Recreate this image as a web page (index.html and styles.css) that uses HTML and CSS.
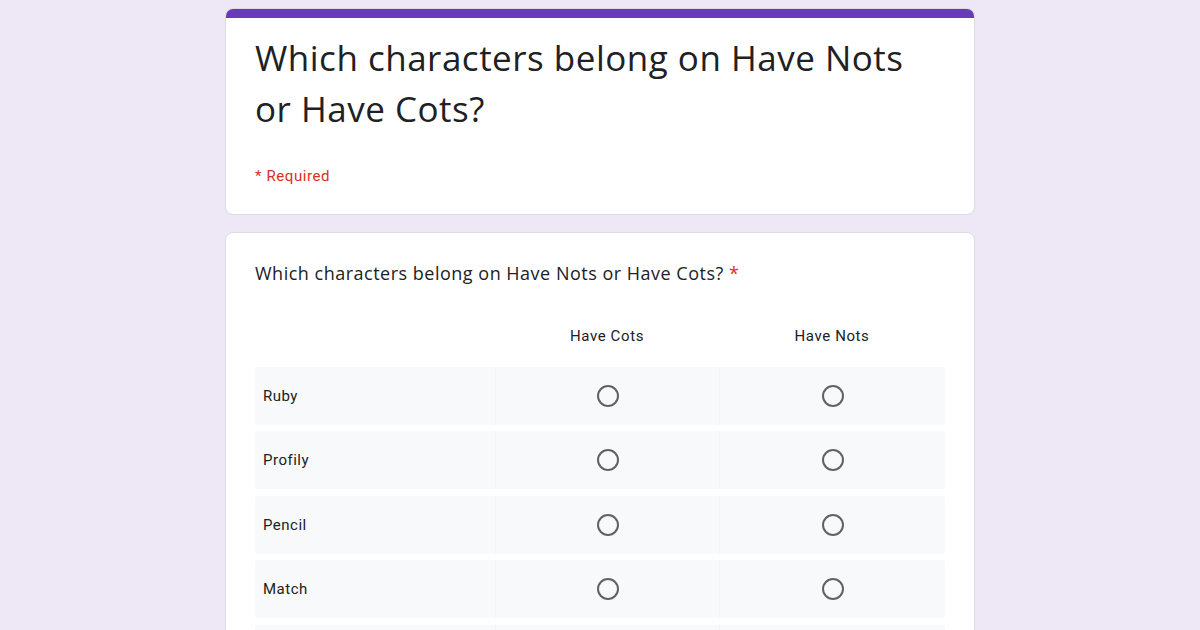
FILE: index.html
```html
<!DOCTYPE html>
<html>
<head>
<meta charset="utf-8">
<link rel="stylesheet" href="styles.css">
</head>
<body>
<div class="page">
  <div class="card header-card">
    <div class="accent"></div>
    <div class="header-body">
      <h1 class="title">Which characters belong on Have Nots or Have Cots?</h1>
      <div class="required">* Required</div>
    </div>
  </div>
  <div class="card question-card">
    <div class="question">Which characters belong on Have Nots or Have Cots? <span class="star">*</span></div>
    <div class="grid">
      <div class="grid-head">
        <div class="cell label"></div>
        <div class="cell">Have Cots</div>
        <div class="cell">Have Nots</div>
      </div>
      <div class="row"><div class="cell label">Ruby</div><div class="cell"><span class="radio"></span></div><div class="cell"><span class="radio"></span></div></div>
      <div class="row"><div class="cell label">Profily</div><div class="cell"><span class="radio"></span></div><div class="cell"><span class="radio"></span></div></div>
      <div class="row"><div class="cell label">Pencil</div><div class="cell"><span class="radio"></span></div><div class="cell"><span class="radio"></span></div></div>
      <div class="row"><div class="cell label">Match</div><div class="cell"><span class="radio"></span></div><div class="cell"><span class="radio"></span></div></div>
      <div class="row"><div class="cell label"></div><div class="cell"></div><div class="cell"></div></div>
    </div>
  </div>
</div>
</body>
</html>
```
FILE: styles.css
```css
html, body {
  margin: 0;
  padding: 0;
  background: #ede7f6;
  height: 630px;
  overflow: hidden;
}
body {
  font-family: Roboto, "Liberation Sans", sans-serif;
  color: #202124;
}
.page {
  width: 750px;
  margin: 0 auto;
  padding-top: 8px;
  display: flex;
  flex-direction: column;
  gap: 17px;
}
.card {
  background: #fff;
  border: 1px solid #dadce0;
  border-radius: 8px;
  box-sizing: border-box;
  overflow: hidden;
}
.header-card {
  height: 207px;
}
.accent {
  height: 10px;
  background: #673ab7;
  margin: -1px -1px 0 -1px;
}
.header-body {
  padding: 14px 30px 0 29px;
}
.title {
  margin: 0;
  font-family: "Open Sans", sans-serif;
  font-weight: 400;
  font-size: 35px;
  line-height: 51px;
  letter-spacing: 0.5px;
  color: #202124;
}
.required {
  margin-top: 32px;
  font-size: 15px;
  line-height: 20px;
  color: #d93025;
  letter-spacing: 0.6px;
}
.question-card {
  padding: 27px 29px 0 29px;
  height: 420px;
}
.question {
  font-family: "Open Sans", sans-serif;
  font-size: 18px;
  line-height: 26px;
  letter-spacing: 0.5px;
  color: #202124;
}
.star {
  color: #d93025;
}
.grid {
  margin-top: 26px;
  display: flex;
  flex-direction: column;
  gap: 6.5px;
}
.grid-head, .row {
  display: grid;
  grid-template-columns: 240px 224px 226px;
}
.grid-head {
  height: 48px;
  align-items: center;
  font-size: 15px;
  letter-spacing: 0.6px;
}
.grid-head .cell {
  text-align: center;
}
.row {
  height: 58px;
  background: #f8f9fa;
  border-radius: 2px;
}
.row .cell {
  display: flex;
  align-items: center;
  justify-content: center;
  border-left: 1px solid #f3f4f5;
}
.row .cell.label {
  justify-content: flex-start;
  padding-left: 8px;
  font-size: 15px;
  letter-spacing: 0.5px;
  border-left: none;
}
.radio {
  width: 22px;
  height: 22px;
  box-sizing: border-box;
  border: 2px solid #5f6368;
  border-radius: 50%;
}
```
